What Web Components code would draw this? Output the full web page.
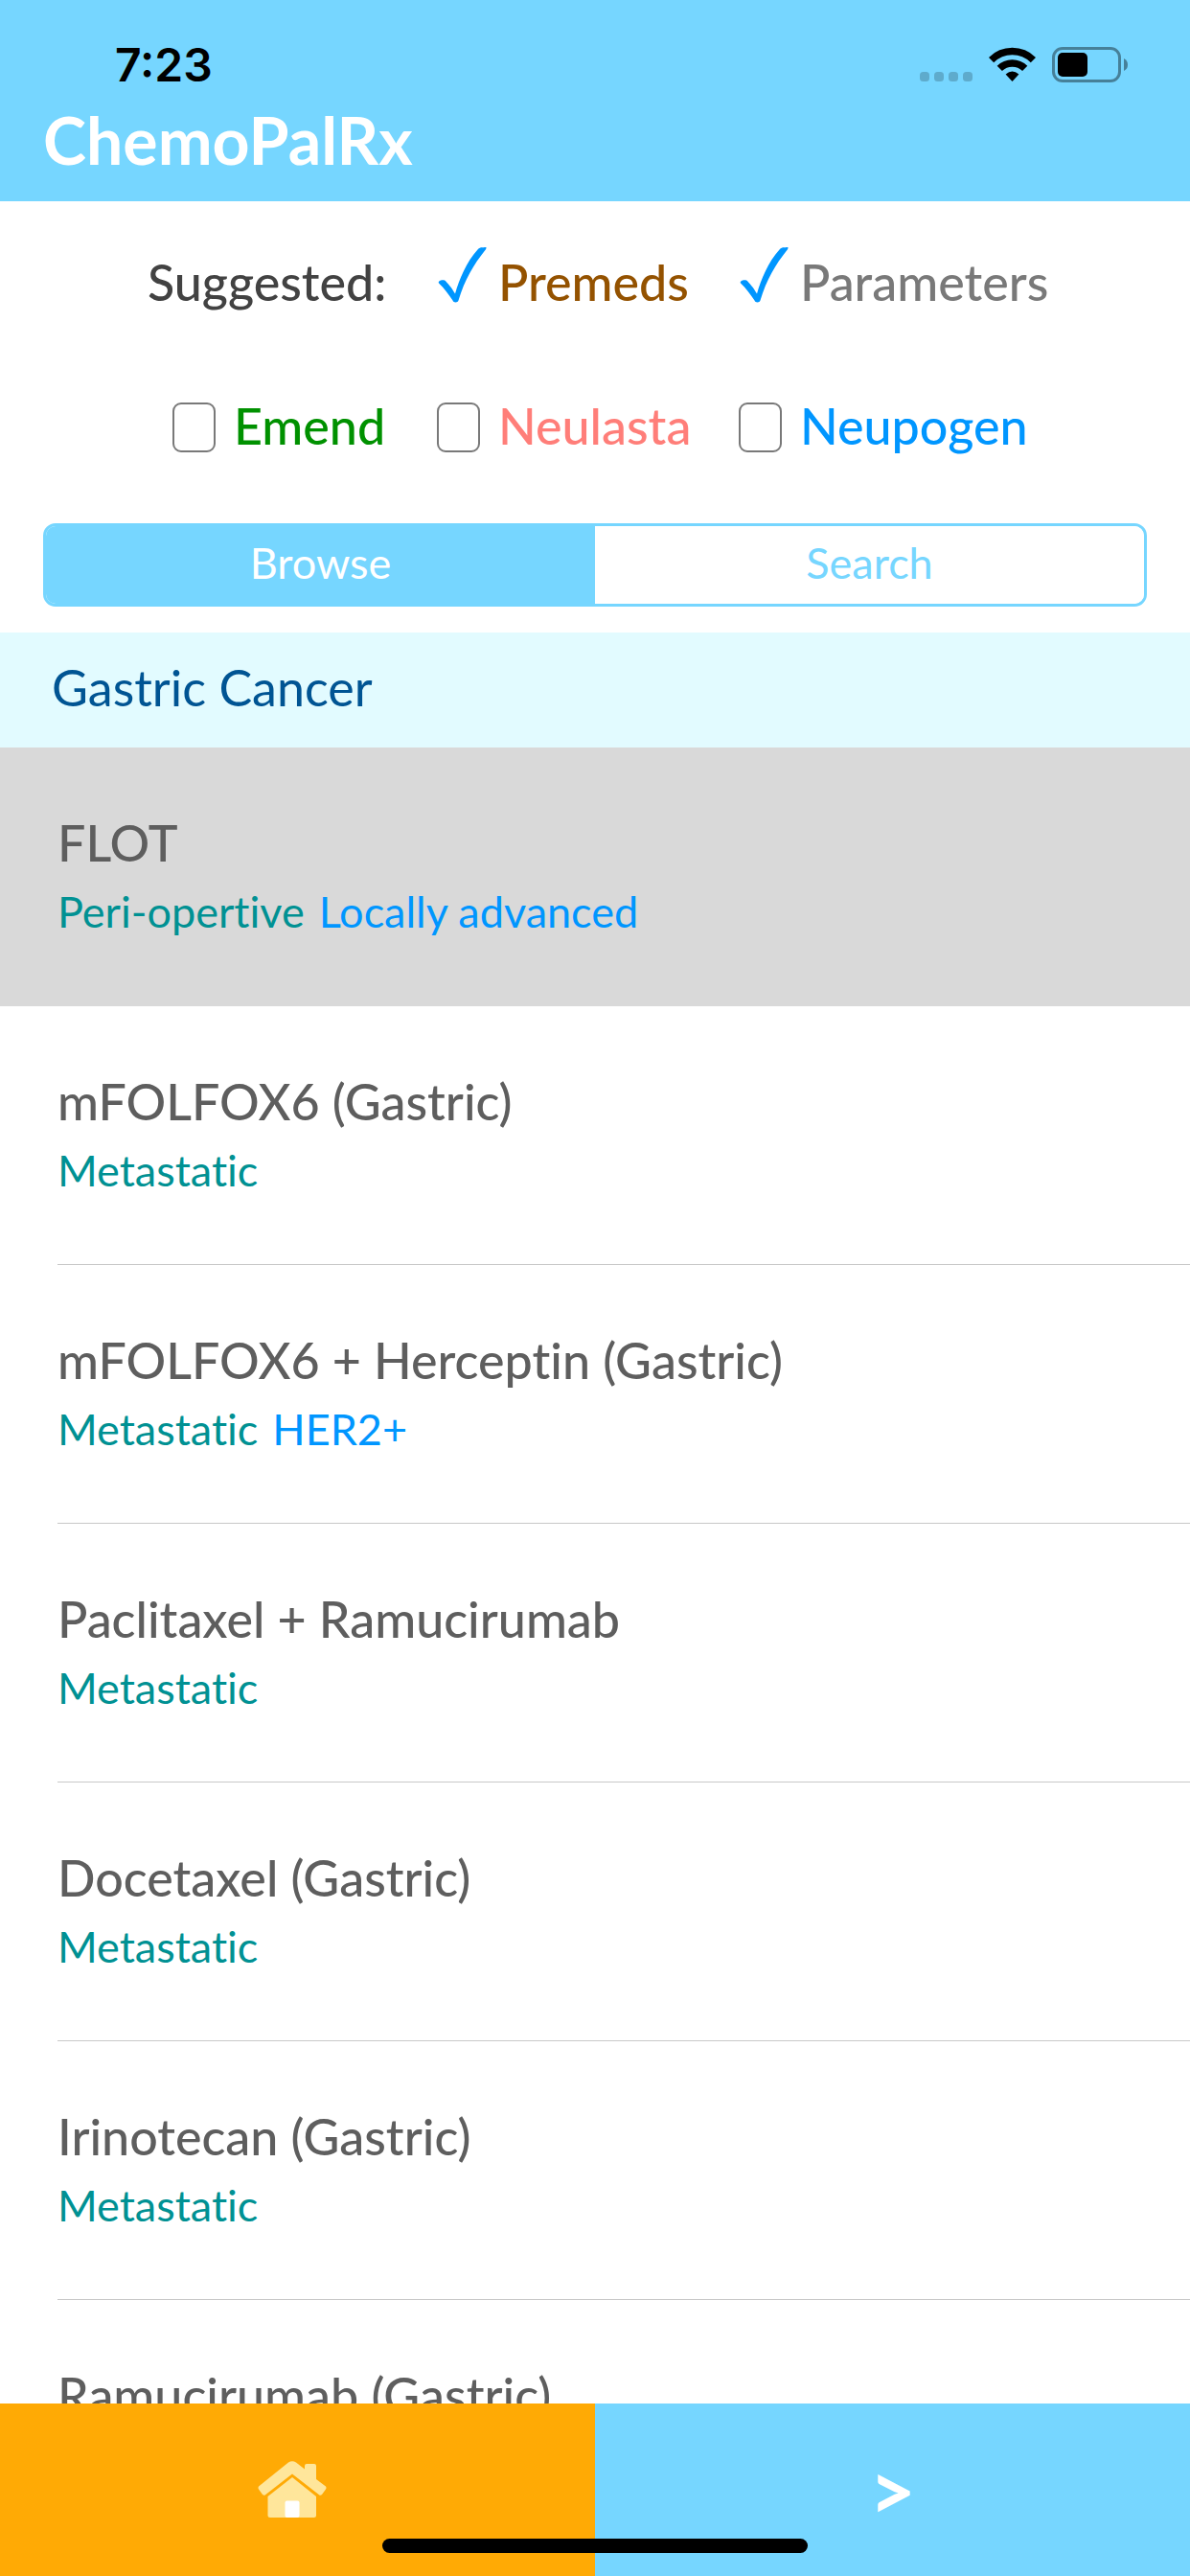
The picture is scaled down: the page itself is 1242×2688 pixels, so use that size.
<!DOCTYPE html>
<html lang="en">
<head>
<meta charset="utf-8">
<meta name="viewport" content="width=device-width, initial-scale=1">
<title>ChemoPalRx</title>
<style>
  :root {
    --sky: #76d6ff;
    --blue: #0096ff;
    --teal: #009193;
    --gutter: 45px;
    --text-l: 52px;
    --text-m: 45px;
  }
  body {
    margin: 0;
    font-family: Lato, "Open Sans", sans-serif;
    font-variant-ligatures: none;
    background: #fff;
  }
</style>
</head>
<body>
<chemo-app>
  <status-bar slot="header" time="7:23"></status-bar>
  <app-title slot="header">ChemoPalRx</app-title>

  <option-grid slot="filters">
    <span>Suggested:</span>
    <check-option checked color="#945200">Premeds</check-option>
    <check-option checked color="#797979">Parameters</check-option>
    <check-option color="#009100" class="first">Emend</check-option>
    <check-option color="#ff7e79">Neulasta</check-option>
    <check-option color="#0096ff">Neupogen</check-option>
  </option-grid>
  <segmented-control slot="filters" first="Browse" second="Search"></segmented-control>

  <section-heading>Gastric Cancer</section-heading>
  <regimen-row selected>FLOT<span slot="stage">Peri-opertive</span><span slot="detail">Locally advanced</span></regimen-row>
  <regimen-row>mFOLFOX6 (Gastric)<span slot="stage">Metastatic</span></regimen-row>
  <regimen-row>mFOLFOX6 + Herceptin (Gastric)<span slot="stage">Metastatic</span><span slot="detail">HER2+</span></regimen-row>
  <regimen-row>Paclitaxel + Ramucirumab<span slot="stage">Metastatic</span></regimen-row>
  <regimen-row>Docetaxel (Gastric)<span slot="stage">Metastatic</span></regimen-row>
  <regimen-row>Irinotecan (Gastric)<span slot="stage">Metastatic</span></regimen-row>
  <regimen-row>Ramucirumab (Gastric)</regimen-row>

  <bottom-bar slot="footer"></bottom-bar>
</chemo-app>

<script>
  const define = (name, render, after) => {
    customElements.define(name, class extends HTMLElement {
      connectedCallback() {
        if (this.shadowRoot) return;
        const root = this.attachShadow({ mode: 'open' });
        root.innerHTML = render(this);
        if (after) after(this, root);
      }
    });
  };

  define('chemo-app', () => `
    <style>
      :host { display: flex; flex-direction: column; height: 100vh; overflow: hidden; }
      header { background: var(--sky); padding-bottom: 19px; }
      header, .filters, footer { flex: none; }
      main { flex: 1; min-height: 0; overflow: hidden; }
    </style>
    <header><slot name="header"></slot></header>
    <div class="filters"><slot name="filters"></slot></div>
    <main><slot></slot></main>
    <footer><slot name="footer"></slot></footer>`);

  define('status-bar', el => `
    <style>
      :host { display: flex; align-items: center; justify-content: space-between;
        height: 63px; padding: 36px 64px 0 120px; font: 600 48px/63px Inter, sans-serif; color: #000; }
      .icons { display: flex; align-items: center; gap: 17px; }
      svg { display: block; }
    </style>
    <span>${el.getAttribute('time')}</span>
    <div class="icons" aria-hidden="true">
      <svg width="55" height="37" viewBox="0 0 55 37" fill="#000" fill-opacity=".2">
        <rect y="26" width="10" height="10" rx="3.5"/><rect x="15" y="26" width="10" height="10" rx="3.5"/>
        <rect x="30" y="26" width="10" height="10" rx="3.5"/><rect x="45" y="26" width="10" height="10" rx="3.5"/>
      </svg>
      <svg width="49" height="37" viewBox="0 0 49 37">
        <path d="M2.6 13.6A31 31 0 0 1 46.4 13.6" fill="none" stroke="#000" stroke-width="7.4"/>
        <path d="M11.3 22.4A18.7 18.7 0 0 1 37.7 22.4" fill="none" stroke="#000" stroke-width="7.4"/>
        <path d="M17.6 28.6Q24.5 22.6 31.4 28.6L25 35.6Q24.5 36.1 24 35.6Z"/>
      </svg>
      <svg width="80" height="37" viewBox="0 0 80 37">
        <rect x="1.5" y="1.5" width="69" height="34" rx="9.5" fill="none" stroke="#000" stroke-opacity=".4" stroke-width="3"/>
        <rect x="6" y="6" width="31" height="25" rx="5"/>
        <path d="M75 12Q79 14 79 18.500Q79 23 75 25Z" fill-opacity=".4"/>
      </svg>
    </div>`);

  define('app-title', () => `
    <style>
      :host { display: block; padding: 2px 0 0 var(--gutter); }
      h1 { margin: 0; font-size: 68px; line-height: 90px; font-weight: 700; color: #fff; }
    </style>
    <h1><slot></slot></h1>`);

  define('option-grid', () => `
    <style>
      :host { display: grid; grid-template-columns: 302fr 315fr 471fr; grid-auto-rows: 150px;
        align-items: center; padding: 9px 0 27px 154px; font-size: var(--text-l); line-height: 60px; font-weight: 500; color: #424242; }
      ::slotted(.first) { padding-left: 26px; }
    </style>
    <slot></slot>`);

  define('check-option', el => `
    <style>
      :host { display: block; color: ${el.getAttribute('color')}; }
      label { display: flex; align-items: center; gap: 19px; font-weight: 500; }
      .box { display: grid; width: 45px; height: 52px; margin-top: 4px; flex: none; }
      .box > * { grid-area: 1 / 1; }
      input { appearance: none; box-sizing: border-box; width: 45px; height: 52px; margin: 0;
        border: 2px solid #797979; border-radius: 9px; background: #fff; }
      input:checked { border-color: transparent; background: none; }
      svg { display: none; overflow: visible; pointer-events: none; }
      input:checked + svg { display: block; }
    </style>
    <label>
      <span class="box">
        <input type="checkbox" ${el.hasAttribute('checked') ? 'checked' : ''}>
        <svg width="45" height="52" viewBox="0 0 45 52" aria-hidden="true">
          <path fill="#0096ff" d="M2 25.500C1 24 3 22.500 5 22.200C7 22 8.500 22.300 9.500 23.700C13 27.500 15.500 30.500 19 36.500C23.500 21 31 3 42.500-9.500C45-12.300 47-11.600 51.500-12C51.500-11 51.300-10 50.600-9.200C38 6.500 29 22 22.500 43.500C22 46 17 46 16.500 43.500C12 37 8 31 2 25.500Z"/>
        </svg>
      </span>
      <slot></slot>
    </label>`);

  define('segmented-control', el => `
    <style>
      :host { display: flex; box-sizing: border-box; height: 87px; margin: 0 var(--gutter) 27px;
        border: 3px solid var(--sky); border-radius: 13px; overflow: hidden; }
      button { flex: 1; border: 0; margin: 0; padding: 0 0 6px; font: 400 var(--text-m)/60px Lato, sans-serif;
        background: #fff; color: var(--sky); }
      button[aria-pressed="true"] { background: var(--sky); color: #fff; }
    </style>
    <button type="button" aria-pressed="true">${el.getAttribute('first')}</button>
    <button type="button" aria-pressed="false">${el.getAttribute('second')}</button>`,
    (el, root) => {
      const buttons = [...root.querySelectorAll('button')];
      buttons.forEach(b => b.addEventListener('click', () =>
        buttons.forEach(o => o.setAttribute('aria-pressed', String(o === b)))));
    });

  define('section-heading', () => `
    <style>
      :host { display: block; background: #e2fbff; padding: 27px 54px 33px; }
      h2 { margin: 0; font-size: var(--text-l); line-height: 60px; font-weight: 400; color: #005493; }
    </style>
    <h2><slot></slot></h2>`);

  define('regimen-row', () => `
    <style>
      :host { display: block; height: 270px; padding-left: 60px; }
      :host([selected]) { background: #d9d9d9; }
      article { box-sizing: border-box; height: 100%; padding-top: 63px; border-bottom: 1px solid #c8c8c8; }
      :host([selected]) article { border-color: transparent; }
      h3 { margin: 0; font-size: var(--text-l); line-height: 72px; font-weight: 500; color: #5e5e5e; }
      p { margin: 0; display: flex; gap: 15px; font-size: var(--text-m); line-height: 72px; color: var(--teal); }
      slot[name="detail"] { color: var(--blue); }
    </style>
    <article>
      <h3><slot></slot></h3>
      <p><slot name="stage"></slot><slot name="detail"></slot></p>
    </article>`);

  define('bottom-bar', () => `
    <style>
      :host { display: grid; grid-template-columns: 1fr 1fr; height: 180px; position: relative; }
      button { display: flex; justify-content: center; align-items: center; border: 0; margin: 0;
        padding: 0; font: 700 84px/84px Lato, sans-serif; color: #fff; background: var(--sky); }
      .home { background: #ffaa05; padding-right: 12px; }
      svg { display: block; }
      .indicator { position: absolute; left: 50%; bottom: 24px; width: 444px; height: 15px;
        margin-left: -222px; border-radius: 8px; background: #000; }
    </style>
    <button class="home" type="button" aria-label="Home">
      <svg width="72" height="60" viewBox="0 0 72 60">
        <g fill="#ffe69b">
          <path d="M32 1.500Q36 -.8 40 1.500L49 8.500V5Q49 3 51 3H59Q61 3 61 5V19L71 26.500Q72 28 71 29.500L67 35Q65.500 36.500 64 35.300L36 13.500L8 35.300Q6.500 36.500 5 35L1 29.500Q0 28 1 26.500Z"/>
          <path d="M36 17L61 37V56.500Q61 59 58.500 59H13Q10.500 59 10.500 56.500V37Z"/>
        </g>
        <rect x="28.500" y="41.500" width="15" height="17.500" rx="2" fill="#fff"/>
      </svg>
    </button>
    <button class="next" type="button" aria-label="Next">&gt;</button>
    <div class="indicator"></div>`);
</script>
</body>
</html>
